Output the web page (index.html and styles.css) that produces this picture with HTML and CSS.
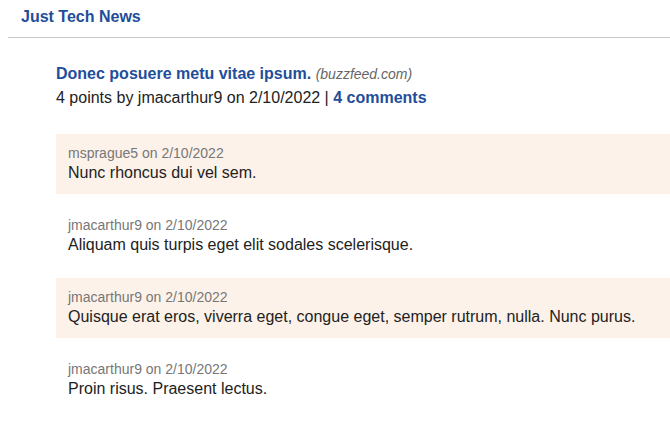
FILE: index.html
```html
<!DOCTYPE html>
<html>
<head>
<meta charset="utf-8">
<link rel="stylesheet" href="styles.css">
</head>
<body>
<header class="site-header">
  <a class="brand" href="#">Just Tech News</a>
</header>
<main class="content">
  <article class="post">
    <div class="post-title"><a href="#">Donec posuere metu vitae ipsum.</a> <span class="domain">(buzzfeed.com)</span></div>
    <div class="post-meta">4 points by jmacarthur9 on 2/10/2022 | <a href="#">4 comments</a></div>
  </article>
  <section class="comments">
    <div class="comment shaded">
      <div class="comment-meta">msprague5 on 2/10/2022</div>
      <div class="comment-text">Nunc rhoncus dui vel sem.</div>
    </div>
    <div class="comment">
      <div class="comment-meta">jmacarthur9 on 2/10/2022</div>
      <div class="comment-text">Aliquam quis turpis eget elit sodales scelerisque.</div>
    </div>
    <div class="comment shaded">
      <div class="comment-meta">jmacarthur9 on 2/10/2022</div>
      <div class="comment-text">Quisque erat eros, viverra eget, congue eget, semper rutrum, nulla. Nunc purus.</div>
    </div>
    <div class="comment">
      <div class="comment-meta">jmacarthur9 on 2/10/2022</div>
      <div class="comment-text">Proin risus. Praesent lectus.</div>
    </div>
  </section>
</main>
</body>
</html>
```
FILE: styles.css
```css
html, body { background: #fff; }
body {
  margin: 8px 0 8px 8px;
  font-family: "Liberation Sans", Arial, sans-serif;
  color: #222;
  font-size: 16px;
}
a { color: #1f4e9a; text-decoration: none; font-weight: bold; }
.site-header {
  padding: 0 13px 11px;
  line-height: 18px;
  border-bottom: 1px solid #c8c8c8;
}
.brand { font-size: 16px; }
.content { padding: 0 0 0 48px; }
.post { padding-top: 24px; }
.post-title { line-height: 24px; font-size: 16px; }
.domain { font-style: italic; color: #666; font-size: 14px; font-weight: normal; }
.post-meta { line-height: 24px; }
.comments { margin-top: 24px; display: flex; flex-direction: column; gap: 12px; }
.comment { padding: 10px 12px; }
.comment.shaded { background: #fdf2e9; }
.comment-meta { color: #777; font-size: 14px; line-height: 18px; }
.comment-text { line-height: 22px; font-size: 16px; }
```
